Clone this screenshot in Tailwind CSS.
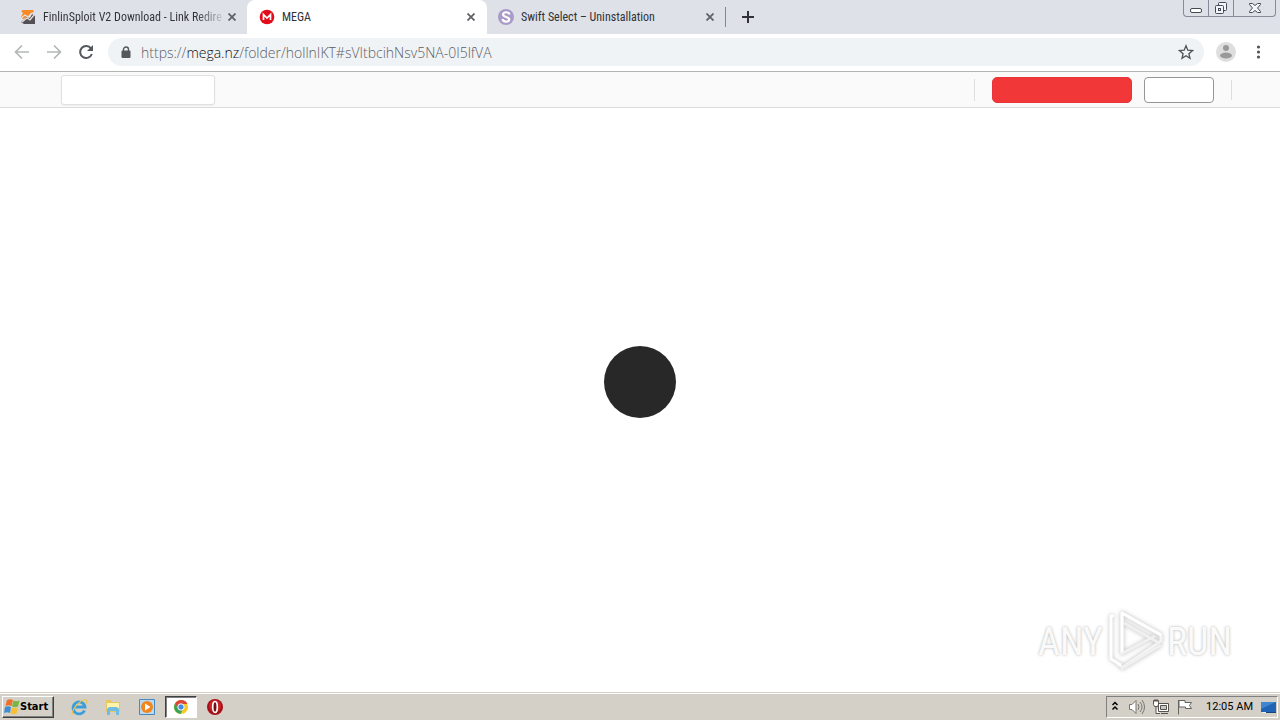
<!DOCTYPE html>
<html lang="en">
<head>
<meta charset="utf-8">
<meta name="viewport" content="width=device-width, initial-scale=1">
<title>MEGA</title>
<script src="https://cdn.jsdelivr.net/npm/@tailwindcss/browser@4"></script>
</head>
<body class="flex h-screen flex-col overflow-hidden bg-white font-['Roboto',sans-serif] text-[11px] text-[#303238]">

<!-- Tab strip -->
<header class="flex h-[34px] shrink-0 items-stretch bg-[#dee1e8] font-['Roboto_Condensed','Liberation_Sans_Narrow',sans-serif] text-[12px]">
  <div class="flex w-[247px] items-center rounded-br-lg pr-[7px] pl-5">
    <svg class="mr-[7px] h-4 w-4 shrink-0" viewBox="0 0 16 16">
      <path d="M1 2l2-1h10l1 2-3 1-3 4-5 2-2-2 2-4z" fill="#f58a27"/>
      <path d="M12 5l3 2v8H4l-3-2 6-5 3 1z" fill="#535057"/>
      <path d="M1 9l4-3 3 2 4-4M2 13l5-4 3 2 4-5" fill="none" stroke="#e9dfd5" stroke-width="1.3"/>
    </svg>
    <a href="#" class="flex-1 whitespace-nowrap"><span class="bg-linear-to-r from-[#303238] from-85% to-[#c3c6cc] bg-clip-text text-transparent">FinlinSploit V2 Download - Link Redire</span></a>
    <button aria-label="Close tab" class="flex h-4 w-4 shrink-0 items-center justify-center"><svg class="h-2 w-2" viewBox="0 0 8 8"><path d="M.5.5l7 7M7.500.5l-7 7" stroke="#5f6368" stroke-width="1.8"/></svg></button>
  </div>
  <div class="flex w-60 items-center rounded-t-lg bg-white pr-2 pl-3">
    <svg class="mr-[7px] h-4 w-4 shrink-0" viewBox="0 0 16 16"><circle cx="8" cy="8" r="7.300" fill="#e20d18"/><path d="M4.500 11V5.500L8 9l3.500-3.500V11" fill="none" stroke="#fff" stroke-width="1.7"/></svg>
    <a href="#" class="flex-1">MEGA</a>
    <button aria-label="Close tab" class="flex h-4 w-4 items-center justify-center"><svg class="h-2 w-2" viewBox="0 0 8 8"><path d="M.5.5l7 7M7.500.5l-7 7" stroke="#5f6368" stroke-width="1.8"/></svg></button>
  </div>
  <div class="flex w-[239px] items-center pr-2 pl-[11px]">
    <svg class="mr-[7px] h-4 w-4 shrink-0" viewBox="0 0 16 16"><circle cx="8" cy="8" r="8" fill="#a99bc9"/><path d="M11.500 5.500C11 2.500 5 2.500 5 5.500S11.500 7.500 11.300 10.500 5 13.200 4.500 10" fill="none" stroke="#fff" stroke-width="2.200"/></svg>
    <a href="#" class="flex-1 whitespace-nowrap">Swift Select – Uninstallation</a>
    <button aria-label="Close tab" class="flex h-4 w-4 items-center justify-center"><svg class="h-2 w-2" viewBox="0 0 8 8"><path d="M.5.5l7 7M7.500.5l-7 7" stroke="#5f6368" stroke-width="1.8"/></svg></button>
  </div>
  <div class="my-[7px] -ml-px w-px bg-[#85888f]"></div>
  <button aria-label="New tab" class="ml-4 flex w-3 items-center justify-center"><svg class="h-3 w-3" viewBox="0 0 12 12"><path d="M6 0v12M0 6h12" stroke="#303238" stroke-width="2"/></svg></button>
  <div class="mr-1 ml-auto flex h-[17px] rounded-b border border-t-0 border-[#858b97] text-[#444a57]">
    <button aria-label="Minimize" class="flex w-[25px] items-center justify-center border-r border-[#858b97]"><svg class="h-4 w-4" viewBox="0 0 16 16"><rect x="2.500" y="8.500" width="11" height="4" rx="1.500" fill="#fff" stroke="currentColor"/></svg></button>
    <button aria-label="Restore" class="flex w-[25px] items-center justify-center border-r border-[#858b97]"><svg class="h-4 w-4" viewBox="0 0 16 16" fill="#f4f5f8" stroke="currentColor"><rect x="5.500" y="2.500" width="8" height="8" rx="1"/><rect x="2.500" y="5.500" width="8" height="8" rx="1"/><rect x="5.500" y="8.500" width="2" height="2"/></svg></button>
    <button aria-label="Close" class="flex w-[41px] items-center justify-center"><svg class="h-4 w-4" viewBox="0 0 16 16"><path d="M2.500 3.500h3l2.500 2 2.500-2h3v1L10.500 8l3 3.500v1h-3L8 10.500l-2.500 2h-3v-1l3-3.500-3-3.500z" fill="#f6f7f9" stroke="currentColor"/></svg></button>
  </div>
</header>

<!-- Toolbar -->
<div class="flex h-[38px] shrink-0 items-center border-b border-[#b2b4b2] bg-white px-3 pb-px">
  <button aria-label="Back" class="mr-3 h-5 w-5"><svg viewBox="0 0 20 20" fill="none" stroke="#b4b6b8" stroke-width="1.700"><path d="M17 10H4M10 3.500L3.500 10l6.500 6.500"/></svg></button>
  <button aria-label="Forward" class="mr-3 h-5 w-5"><svg viewBox="0 0 20 20" fill="none" stroke="#b4b6b8" stroke-width="1.700"><path d="M3 10h13M10 3.500l6.500 6.500-6.500 6.500"/></svg></button>
  <button aria-label="Reload" class="mr-3 h-5 w-5"><svg viewBox="0 0 20 20"><path d="M15 6.500A6 6 0 1 0 15.800 12" fill="none" stroke="#54575b" stroke-width="2"/><path d="M17 3v6h-6z" fill="#54575b"/></svg></button>
  <div class="flex h-7 flex-1 items-center rounded-full bg-[#f0f3f6] pr-[10px] pl-3">
    <svg class="mr-[9px] h-3 w-3 shrink-0" viewBox="0 0 12 12"><path d="M3.500 5V3.500a2.500 2.500 0 0 1 5 0V5" fill="none" stroke="#54575b" stroke-width="1.400"/><rect x="1.500" y="4.500" width="9" height="7.500" rx="1" fill="#54575b"/></svg>
    <a href="#" class="flex-1 font-['Open_Sans',sans-serif] text-[14px] font-light whitespace-nowrap text-[#5c6065]">https://<span class="text-[#101114]">mega.nz</span>/folder/hollnIKT#sVItbcihNsv5NA-0I5lfVA</a>
    <button aria-label="Bookmark this page" class="h-4 w-4"><svg viewBox="0 0 16 16"><path d="M8 1.800l1.800 4.400 4.700.4-3.600 3.100 1.100 4.600L8 11.800l-4 2.500 1.100-4.600-3.600-3.100 4.700-.4z" fill="none" stroke="#505357" stroke-width="1.300"/></svg></button>
  </div>
  <button aria-label="Profile" class="ml-3 h-5 w-5"><svg viewBox="0 0 20 20"><circle cx="10" cy="10" r="10" fill="#dedede"/><circle cx="10" cy="6" r="3" fill="#999"/><ellipse cx="10" cy="13.500" rx="6" ry="3" fill="#999"/></svg></button>
  <button aria-label="Menu" class="ml-3 h-5 w-5"><svg viewBox="0 0 20 20" fill="#505357"><circle cx="10.500" cy="5" r="1.600"/><circle cx="10.500" cy="10" r="1.600"/><circle cx="10.500" cy="15" r="1.600"/></svg></button>
</div>

<!-- Page header -->
<div class="flex h-9 shrink-0 items-center border-b border-[#dcdcdc] bg-[#fafafa] pr-12 pl-[61px]">
  <input type="search" aria-label="Search" class="h-[30px] w-[154px] rounded-[3px] border border-[#e0e0e0] bg-white px-2 shadow-xs outline-none">
  <div class="ml-auto h-[22px] w-px bg-[#dedede]"></div>
  <button aria-label="Create account" class="ml-[17px] h-[26px] w-[140px] rounded-[5px] border border-[#e83539] bg-[#f13738]"></button>
  <button aria-label="Login" class="ml-3 h-[26px] w-[70px] rounded-[4px] border border-[#969696] bg-white"></button>
  <div class="ml-[17px] h-5 w-px bg-[#dedede]"></div>
</div>

<!-- Page body with loading indicator -->
<main class="relative flex flex-1 items-center justify-center">
  <div role="status" aria-label="Loading" class="mb-9 h-[72px] w-[72px] rounded-full bg-[#282828]"></div>
  <div class="absolute right-12 bottom-5 flex h-16 items-center gap-1 font-['Roboto_Condensed','Liberation_Sans_Narrow',sans-serif] text-[38px] text-[#fafafa] [text-shadow:0_0_3px_#b0b0b0]">
    <span class="pt-1">ANY</span>
    <svg class="h-16 w-14 overflow-visible drop-shadow-[0_0_2px_#b8b8b8]" viewBox="0 0 56 64" fill="none" stroke-linejoin="round">
      <path d="M15 46V5l39 22v6L16 59l-6-3" stroke="#f4f4f4" stroke-width="3"/>
      <path d="M15 46V5l39 22M7 8H4v43l10 6" stroke="#fff" stroke-width="3"/>
      <path d="M17 15l35 20M14 46l34-18M14 61l40-24" stroke="#f0f0f0" stroke-width="3"/>
    </svg>
    <span class="pt-1">RUN</span>
  </div>
</main>

<!-- Taskbar -->
<footer class="flex h-7 shrink-0 items-end border-t border-[#d4d0c8] bg-[#d4d0c8] px-0.5 text-black shadow-[inset_0_1px_0_#fff]">
  <button class="mb-0.5 flex h-[22px] w-[52px] items-center border border-t-white border-r-[#404040] border-b-[#404040] border-l-white pl-px font-['DejaVu_Sans_Condensed',sans-serif] font-bold shadow-[inset_-1px_-1px_0_#808080]">
    <svg class="h-4 w-4 shrink-0" viewBox="0 0 16 16"><path d="M3 1q3-1.500 6 0L7.500 7q-3-1.500-6 0z" fill="#ed702b"/><path d="M9.500 1.500q3 1.500 6 0L14 7.500q-3 1.500-6 0z" fill="#78b542"/><path d="M1 8q3-1.500 6 0l-1 6q-3-1.500-6 0z" fill="#408ed1"/><path d="M8 8.500q3 1.500 6 0l-1.500 6q-3 1.500-6 0z" fill="#f7bf36"/></svg>
    <span>Start</span>
  </button>
  <nav aria-label="Quick launch" class="mb-0.5 ml-4 flex h-[22px] items-center">
    <button aria-label="Internet Explorer" class="h-[18px] w-[18px]"><svg viewBox="0 0 18 18" fill="none"><path d="M14.500 12.500A6 6 0 1 1 15 9H5" stroke="#3b9edb" stroke-width="2.800"/><path d="M3 16.500C-1 15 11 0 16 2q2 1 0 4" stroke="#edc449" stroke-width="1.200"/></svg></button>
    <button aria-label="File Explorer" class="ml-4 h-[18px] w-[18px]"><svg viewBox="0 0 18 18"><path d="M2 2h5l1 2h8v10H2z" fill="#e8c763"/><path d="M3 5h12v8H3z" fill="#fff2aa"/><path d="M3 17v-6q1-2 3-2h6q2 0 3 2v6h-3v-4H6v4z" fill="#70bde4"/></svg></button>
    <button aria-label="Media Player" class="ml-4 h-[18px] w-[18px]"><svg viewBox="0 0 18 18"><path d="M1.500 1.500h15v15h-15z" fill="#bbd9ef" stroke="#4689c1"/><circle cx="9" cy="9" r="6" fill="#f1861e"/><path d="M7 5.500L12.500 9 7 12.500z" fill="#fff"/></svg></button>
    <button aria-label="Google Chrome" class="ml-[9px] flex h-[22px] w-8 items-center justify-center border border-t-[#404040] border-r-white border-b-white border-l-[#404040] bg-white shadow-[inset_1px_1px_0_#808080]"><svg class="h-4 w-4" viewBox="0 0 16 16"><circle cx="8" cy="8" r="7" fill="#f7c926"/><path d="M2 4.500A7 7 0 0 1 14.500 5H8L5 10z" fill="#dc4638"/><path d="M2 4.500L5.500 10l4 1L7.500 15A7 7 0 0 1 2 4.500z" fill="#39a352"/><circle cx="8" cy="8" r="3.200" fill="#4688e8" stroke="#fff"/></svg></button>
    <button aria-label="Opera" class="ml-[9px] h-[18px] w-[18px]"><svg viewBox="0 0 18 18"><circle cx="9" cy="9" r="8" fill="#a70f15"/><circle cx="9" cy="8" r="6" fill="#c82429"/><ellipse cx="9" cy="9" rx="2.300" ry="5.500" fill="#761015" stroke="#fff" stroke-width="1.700"/></svg></button>
  </nav>
  <div class="mb-0.5 ml-auto flex h-[22px] w-[172px] items-center border border-t-[#808080] border-r-white border-b-white border-l-[#808080] pl-1">
    <button aria-label="Show hidden icons" class="h-3 w-2"><svg viewBox="0 0 8 12" fill="none" stroke="#000" stroke-width="1.500"><path d="M1.500 4l2.500-2.500 2.500 2.500M1.500 8.500l2.500-2.500 2.500 2.500"/></svg></button>
    <button aria-label="Volume" class="ml-[9px] h-4 w-[18px]"><svg viewBox="0 0 18 16" fill="none" stroke="#77756f"><path d="M1.500 5.500H4l4-4v13l-4-4H1.500z" fill="#fff"/><path d="M10 5q2 3 0 6M12 3q4 5 0 10M14 1q5 7 0 14"/></svg></button>
    <button aria-label="Network" class="ml-1.5 h-4 w-[18px]"><svg viewBox="0 0 18 16" fill="#fff" stroke="#55534e"><path d="M6.500 4.500h10v8h-10zM9 14.500h7M1.500 1.500h5v4l-1 2h-3l-1-2zM4 7.500v7h4M3 0v3M5 0v3"/><path d="M8.500 6.500h6v4h-6z" fill="#c9c8c4"/></svg></button>
    <button aria-label="Action Center" class="ml-1.5 h-4 w-[18px]"><svg viewBox="0 0 18 16" fill="#fff" stroke="#66645f"><path d="M2.500 1v14.500M3 1.500h6v2h6.500l-2 3 2 3h-6v-1.500H3z"/></svg></button>
    <time class="ml-auto whitespace-nowrap">12:05 AM</time>
    <button aria-label="Show desktop" class="ml-[7px] h-4 w-[17px]"><svg viewBox="0 0 17 16"><path d="M1 3h15v10H1z" fill="#2164b5"/><path d="M1 3h15L1 10z" fill="#3f86d0"/><path d="M2 13h4v1H2z" fill="#eee"/><path d="M6 13h10v1H6z" fill="#174379"/></svg></button>
  </div>
</footer>
</body>
</html>
